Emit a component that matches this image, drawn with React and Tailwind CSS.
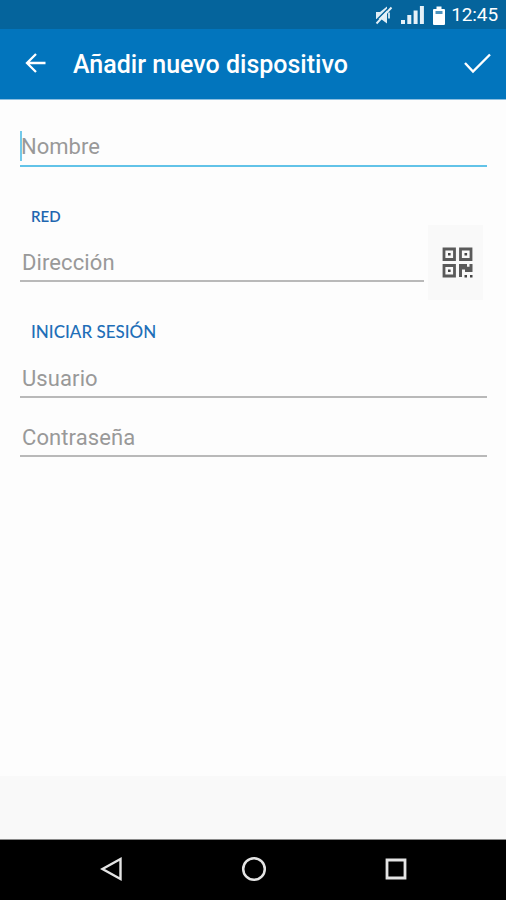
import React, { useState } from 'react';

const StatusBar = () => (
  <div className="flex h-[29px] items-center justify-end bg-[#05649c] pr-[8px] text-white">
    <svg className="mr-[8px] h-[20px] w-[18px]" viewBox="0 0 18 20" fill="none">
      <path d="M1 7h4l7-5.500v17L6 14H1z" fill="#e0eef6" />
      <path d="M14 7.500v6" stroke="#d8e9f3" strokeWidth="1.800" />
      <path d="M0.500 16L15 1.500" stroke="#05649c" strokeWidth="1.500" />
      <path d="M1.500 18.500L16.500 2.500" stroke="#e6f1f8" strokeWidth="1.900" />
    </svg>
    <svg className="mr-[9px] h-[20px] w-[23px]" viewBox="0 0 23 20" fill="#e6f1f8">
      <path d="M0 15h4v4H0zM6.300 10h4v9h-4zM12.600 5.500h4V19h-4zM18.900 1h4v18h-4z" />
    </svg>
    <svg className="mr-[6px] h-[20px] w-[12px]" viewBox="0 0 12 20">
      <path d="M3.500 1.500h5V4h2.500a1 1 0 0 1 1 1v14a1 1 0 0 1-1 1H1a1 1 0 0 1-1-1V5a1 1 0 0 1 1-1h2.500z" fill="#ffffff" />
      <path d="M2.500 6h7v3h-7z" fill="#4f93bd" />
    </svg>
    <span className="text-[19px] leading-none tracking-[-0.1px]">12:45</span>
  </div>
);

const TextField = ({ name, label, type = 'text', value, onChange, active }) => (
  <div
    className={`relative flex h-[41px] items-start border-b-2 ${
      active ? 'border-[#62c3e8]' : 'border-[#b9b9b9]'
    }`}
  >
    {active && <span className="absolute top-[5px] left-0 h-[30px] w-[2px] bg-[#72c9ea]" />}
    <input
      type={type}
      name={name}
      aria-label={label}
      placeholder={label}
      value={value}
      onChange={onChange}
      className={`h-[39px] w-full bg-transparent text-[22px] text-[#444444] placeholder:text-[#999999] focus:outline-none ${
        active ? 'pt-[2px] pl-[1px]' : 'pt-[4px] pl-[2px] tracking-[0.1px]'
      }`}
    />
  </div>
);

const QrIcon = () => (
  <svg className="h-[31px] w-[31px]" viewBox="0 0 31 31" fill="none">
    <g stroke="#5a5a5a" strokeWidth="2.800">
      <path d="M2 2h10.500v10.500H2zM18.500 2H29v10.500H18.500zM2 18.500h10.500V29H2z" />
    </g>
    <path
      fill="#444444"
      d="M6 6h2.600v2.600H6zM22.500 6h2.600v2.600h-2.600zM6 22.500h2.600v2.600H6zM22.500 28h2.500v2.500h-2.500zM28 28h2.500v2.500H28z"
    />
    <path fill="#5a5a5a" d="M17 17h8v2.700h2.500V17h3v8h-7.500v-2.500h-3V30h-3z" />
  </svg>
);

const App = () => {
  const [formData, setFormData] = useState({
    nombre: '',
    direccion: '',
    usuario: '',
    contrasena: '',
  });

  const handleInputChange = (e) => {
    const { name, value } = e.target;
    setFormData((prevData) => ({
      ...prevData,
      [name]: value,
    }));
  };

  return (
    <div className="flex h-[900px] w-[506px] flex-col overflow-hidden bg-[#fdfdfd] font-['Roboto',sans-serif]">
      <StatusBar />

      <header className="flex h-[71px] items-center border-b border-[#8dbfe0] bg-[#0275bd] pr-[15px] pl-[25px] text-white">
        <button type="button" aria-label="Volver">
          <svg className="h-[22px] w-[21px]" viewBox="0 0 21 22" fill="none" stroke="currentColor" strokeWidth="2.300">
            <path d="M20.500 10H2M11 1L2 10l9 9" />
          </svg>
        </button>
        <h1 className="ml-[27px] flex-1 text-[25px] leading-none font-medium whitespace-nowrap">
          Añadir nuevo dispositivo
        </h1>
        <button type="button" aria-label="Guardar">
          <svg className="h-[22px] w-[27px]" viewBox="0 0 27 22" fill="none" stroke="currentColor" strokeWidth="2.400">
            <path d="M1 10L9 18.500L26 1.500" />
          </svg>
        </button>
      </header>

      <form className="flex-1 pt-[26px] pr-[19px] pl-[20px]" autoComplete="off">
        <TextField name="nombre" label="Nombre" value={formData.nombre} onChange={handleInputChange} active />

        <h2 className="mt-[40px] ml-[11px] font-['Lato',sans-serif] text-[15px] leading-[18px] font-semibold text-[#1f66b0]">
          RED
        </h2>
        <div className="flex h-[75px] items-start">
          <div className="mt-[16px] w-[404px]">
            <TextField
              name="direccion"
              label="Dirección"
              value={formData.direccion}
              onChange={handleInputChange}
            />
          </div>
          <button
            type="button"
            aria-label="Escanear código"
            className="ml-[4px] flex h-[75px] w-[55px] items-center justify-center bg-[#f9f9f9] pl-[4px]"
          >
            <QrIcon />
          </button>
        </div>

        <h2 className="mt-[23px] ml-[11px] font-['Lato',sans-serif] text-[17px] leading-[18px] font-medium text-[#1f6fb8]">
          INICIAR SESIÓN
        </h2>
        <div className="mt-[16px]">
          <TextField name="usuario" label="Usuario" value={formData.usuario} onChange={handleInputChange} />
        </div>
        <div className="mt-[18px]">
          <TextField
            type="password"
            name="contrasena"
            label="Contraseña"
            value={formData.contrasena}
            onChange={handleInputChange}
          />
        </div>
      </form>

      <div className="h-[64px] border-b border-[#8a8a8a] bg-[#f9f9f9]" />

      <nav className="flex h-[60px] items-center justify-between bg-black pr-[99px] pb-[2px] pl-[100px]">
        <svg className="h-[26px] w-[23px]" viewBox="0 0 23 26" fill="none" stroke="#e4e4e4" strokeWidth="2.400">
          <path d="M20.500 3v20L2.500 13z" />
        </svg>
        <svg className="h-[26px] w-[26px]" viewBox="0 0 26 26" fill="none" stroke="#e4e4e4" strokeWidth="2.500">
          <circle cx="13" cy="13" r="10.800" />
        </svg>
        <svg className="h-[22px] w-[22px]" viewBox="0 0 22 22" fill="none" stroke="#e4e4e4" strokeWidth="2.800">
          <path d="M2 2h18v18H2z" />
        </svg>
      </nav>
    </div>
  );
};

export default App;
